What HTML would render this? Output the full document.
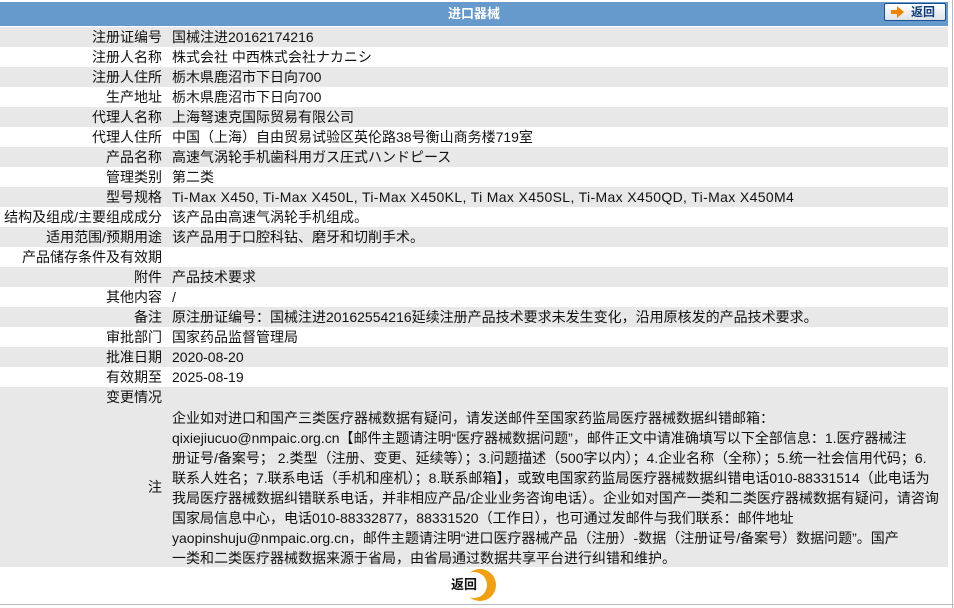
<!DOCTYPE html>
<html><head><meta charset="utf-8"><style>
body{margin:0;width:954px;height:608px;background:#fff;font-family:"Liberation Sans","Noto Sans CJK SC",sans-serif;font-size:14px;color:#111;position:relative;overflow:hidden}
.hd{position:absolute;left:0;top:2px;width:948px;height:24px;background:#6699cc;color:#fff;font-weight:bold;text-align:center;line-height:24px;font-size:13px}
.btn{position:absolute;left:884px;top:3px;width:62px;height:18px;border:1px solid #1a4f8f;border-radius:2px;background:linear-gradient(#fff,#dde3ea);box-sizing:border-box}
.btn span{position:absolute;left:26px;top:0;line-height:16px;color:#0d3d7a;font-weight:bold;font-size:12px}
.row{position:absolute;left:0;width:948px;height:20px;line-height:20px;white-space:nowrap}
.g{background:#e8e8e8}
.l{position:absolute;right:786px;text-align:right;white-space:nowrap}
.v{position:absolute;left:172px}
.note{position:absolute;left:0;top:407px;width:948px;height:160px;background:#e8e8e8}
.note .v{top:1px;line-height:20px;white-space:nowrap}
.note .l{top:70px;line-height:20px}
.vl{position:absolute;left:952px;top:0;width:1px;height:608px;background:#bbb}
.bl{position:absolute;left:0;top:604px;width:954px;height:1px;background:#bbb}
.lat{letter-spacing:0.35px}
</style></head><body>
<div class="hd">进口器械</div>
<div class="btn"><svg width="14" height="12" style="position:absolute;left:6px;top:2px"><polygon points="0,4 6,4 6,0 13,6 6,12 6,8 0,8" fill="#f08400"/></svg><span>返回</span></div>
<div class="row g" style="top:27px"><span class="l">注册证编号</span><span class="v">国械注进20162174216</span></div>
<div class="row" style="top:47px"><span class="l">注册人名称</span><span class="v">株式会社 中西株式会社ナカニシ</span></div>
<div class="row g" style="top:67px"><span class="l">注册人住所</span><span class="v">栃木県鹿沼市下日向700</span></div>
<div class="row" style="top:87px"><span class="l">生产地址</span><span class="v">栃木県鹿沼市下日向700</span></div>
<div class="row g" style="top:107px"><span class="l">代理人名称</span><span class="v">上海弩速克国际贸易有限公司</span></div>
<div class="row" style="top:127px"><span class="l">代理人住所</span><span class="v">中国（上海）自由贸易试验区英伦路38号衡山商务楼719室</span></div>
<div class="row g" style="top:147px"><span class="l">产品名称</span><span class="v">高速气涡轮手机歯科用ガス圧式ハンドピース</span></div>
<div class="row" style="top:167px"><span class="l">管理类别</span><span class="v">第二类</span></div>
<div class="row g" style="top:187px"><span class="l">型号规格</span><span class="v lat">Ti-Max X450, Ti-Max X450L, Ti-Max X450KL, Ti Max X450SL, Ti-Max X450QD, Ti-Max X450M4</span></div>
<div class="row" style="top:207px"><span class="l">结构及组成/主要组成成分</span><span class="v">该产品由高速气涡轮手机组成。</span></div>
<div class="row g" style="top:227px"><span class="l">适用范围/预期用途</span><span class="v">该产品用于口腔科钻、磨牙和切削手术。</span></div>
<div class="row" style="top:247px"><span class="l">产品储存条件及有效期</span><span class="v"></span></div>
<div class="row g" style="top:267px"><span class="l">附件</span><span class="v">产品技术要求</span></div>
<div class="row" style="top:287px"><span class="l">其他内容</span><span class="v">/</span></div>
<div class="row g" style="top:307px"><span class="l">备注</span><span class="v">原注册证编号：国械注进20162554216延续注册产品技术要求未发生变化，沿用原核发的产品技术要求。</span></div>
<div class="row" style="top:327px"><span class="l">审批部门</span><span class="v">国家药品监督管理局</span></div>
<div class="row g" style="top:347px"><span class="l">批准日期</span><span class="v">2020-08-20</span></div>
<div class="row" style="top:367px"><span class="l">有效期至</span><span class="v">2025-08-19</span></div>
<div class="row g" style="top:387px"><span class="l">变更情况</span><span class="v"></span></div>
<div class="note"><span class="l">注</span><div class="v">企业如对进口和国产三类医疗器械数据有疑问，请发送邮件至国家药监局医疗器械数据纠错邮箱：<br>qixiejiucuo@nmpaic.org.cn【邮件主题请注明“医疗器械数据问题”，邮件正文中请准确填写以下全部信息：1.医疗器械注<br>册证号/备案号； 2.类型（注册、变更、延续等）；3.问题描述（500字以内）；4.企业名称（全称）；5.统一社会信用代码；6.<br>联系人姓名；7.联系电话（手机和座机）；8.联系邮箱】，或致电国家药监局医疗器械数据纠错电话010-88331514（此电话为<br>我局医疗器械数据纠错联系电话，并非相应产品/企业业务咨询电话）。企业如对国产一类和二类医疗器械数据有疑问，请咨询<br>国家局信息中心，电话010-88332877，88331520（工作日），也可通过发邮件与我们联系：邮件地址<br>yaopinshuju@nmpaic.org.cn，邮件主题请注明“进口医疗器械产品（注册）-数据（注册证号/备案号）数据问题”。国产<br>一类和二类医疗器械数据来源于省局，由省局通过数据共享平台进行纠错和维护。</div></div>
<svg style="position:absolute;left:462px;top:569px" width="36" height="34"><circle cx="18" cy="16" r="16" fill="#f0a010"/><circle cx="12" cy="16" r="13" fill="#fff"/></svg>
<div style="position:absolute;left:451px;top:576px;font-weight:bold;font-size:13px;line-height:18px">返回</div>
<div class="vl"></div><div class="bl"></div>
</body></html>
